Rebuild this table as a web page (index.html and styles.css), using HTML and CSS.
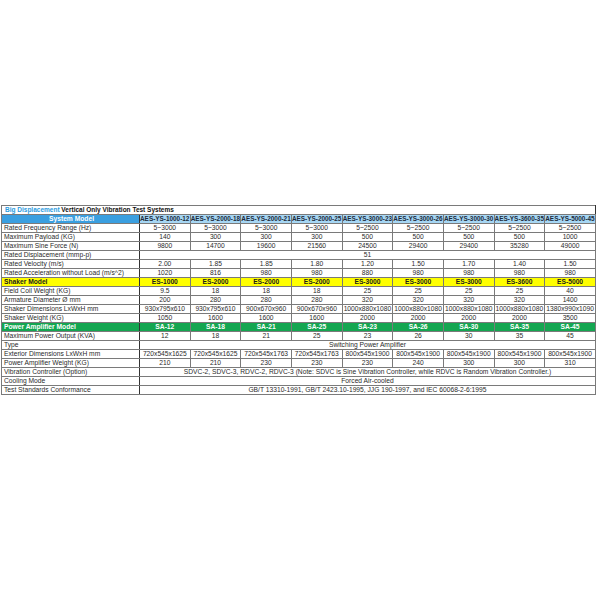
FILE: index.html
```html
<!DOCTYPE html>
<html>
<head>
<meta charset="utf-8">
<link rel="stylesheet" href="styles.css">
</head>
<body>
<div class="page">
<table class="spec">
<colgroup><col class="c-label"><col class="c-data"><col class="c-data"><col class="c-data"><col class="c-data"><col class="c-data"><col class="c-data"><col class="c-data"><col class="c-data"><col class="c-data"></colgroup>
<tr class="title"><td colspan="10"><span class="blue">Big Displacement</span> Vertical Only Vibration Test Systems</td></tr>
<tr class="sys"><td class="sys-label">System Model</td><td>AES-YS-1000-12</td><td>AES-YS-2000-18</td><td>AES-YS-2000-21</td><td>AES-YS-2000-25</td><td>AES-YS-3000-23</td><td>AES-YS-3000-26</td><td>AES-YS-3000-30</td><td>AES-YS-3600-35</td><td>AES-YS-5000-45</td></tr>
<tr><td>Rated Frequency Range (Hz)</td><td>5~3000</td><td>5~3000</td><td>5~3000</td><td>5~3000</td><td>5~2500</td><td>5~2500</td><td>5~2500</td><td>5~2500</td><td>5~2500</td></tr>
<tr><td>Maximum Payload (KG)</td><td>140</td><td>300</td><td>300</td><td>300</td><td>500</td><td>500</td><td>500</td><td>500</td><td>1000</td></tr>
<tr><td>Maximum Sine Force (N)</td><td>9800</td><td>14700</td><td>19600</td><td>21560</td><td>24500</td><td>29400</td><td>29400</td><td>35280</td><td>49000</td></tr>
<tr><td>Rated Displacement (mmp-p)</td><td colspan="9">51</td></tr>
<tr><td>Rated Velocity (m/s)</td><td>2.00</td><td>1.85</td><td>1.85</td><td>1.80</td><td>1.20</td><td>1.50</td><td>1.70</td><td>1.40</td><td>1.50</td></tr>
<tr><td>Rated Acceleration without Load (m/s^2)</td><td>1020</td><td>816</td><td>980</td><td>980</td><td>880</td><td>980</td><td>980</td><td>980</td><td>980</td></tr>
<tr class="shaker"><td>Shaker Model</td><td>ES-1000</td><td>ES-2000</td><td>ES-2000</td><td>ES-2000</td><td>ES-3000</td><td>ES-3000</td><td>ES-3000</td><td>ES-3600</td><td>ES-5000</td></tr>
<tr><td>Field Coil Weight (KG)</td><td>9.5</td><td>18</td><td>18</td><td>18</td><td>25</td><td>25</td><td>25</td><td>25</td><td>40</td></tr>
<tr><td>Armature Diameter Ø mm</td><td>200</td><td>280</td><td>280</td><td>280</td><td>320</td><td>320</td><td>320</td><td>320</td><td>1400</td></tr>
<tr><td>Shaker Dimensions LxWxH mm</td><td>930x795x610</td><td>930x795x610</td><td>900x670x960</td><td>900x670x960</td><td>1000x880x1080</td><td>1000x880x1080</td><td>1000x880x1080</td><td>1000x880x1080</td><td>1380x990x1090</td></tr>
<tr><td>Shaker Weight (KG)</td><td>1050</td><td>1600</td><td>1600</td><td>1600</td><td>2000</td><td>2000</td><td>2000</td><td>2000</td><td>3500</td></tr>
<tr class="amp"><td>Power Amplifier Model</td><td>SA-12</td><td>SA-18</td><td>SA-21</td><td>SA-25</td><td>SA-23</td><td>SA-26</td><td>SA-30</td><td>SA-35</td><td>SA-45</td></tr>
<tr><td>Maximum Power Output (KVA)</td><td>12</td><td>18</td><td>21</td><td>25</td><td>23</td><td>26</td><td>30</td><td>35</td><td>45</td></tr>
<tr><td>Type</td><td colspan="9">Switching Power Amplifier</td></tr>
<tr><td>Exterior Dimensions LxWxH mm</td><td>720x545x1625</td><td>720x545x1625</td><td>720x545x1763</td><td>720x545x1763</td><td>800x545x1900</td><td>800x545x1900</td><td>800x545x1900</td><td>800x545x1900</td><td>800x545x1900</td></tr>
<tr><td>Power Amplifier Weight (KG)</td><td>210</td><td>210</td><td>230</td><td>230</td><td>230</td><td>240</td><td>300</td><td>300</td><td>310</td></tr>
<tr><td>Vibration Controller (Option)</td><td colspan="9">SDVC-2, SDVC-3, RDVC-2, RDVC-3 (Note: SDVC is Sine Vibration Controller, while RDVC is Random Vibration Controller.)</td></tr>
<tr><td>Cooling Mode</td><td colspan="9">Forced Air-cooled</td></tr>
<tr><td>Test Standards Conformance</td><td colspan="9">GB/T 13310-1991, GB/T 2423.10-1995, JJG 190-1997, and IEC 60068-2-6:1995</td></tr>
</table>
</div>
</body>
</html>
```

FILE: styles.css
```css
html, body {
  margin: 0;
  padding: 0;
  background: #ffffff;
}
.page {
  padding: 205px 0 0 1px;
}
.spec {
  border-collapse: collapse;
  table-layout: fixed;
  width: 594px;
  font-family: "Liberation Sans", Arial, sans-serif;
  font-size: 6.7px;
  color: #2a2a2a;
}
.c-label { width: 138px; }
.c-data { width: 50.67px; }
.spec td {
  height: 8px;
  line-height: 8px;
  padding: 0;
  border: 1px solid #7a7a7a;
  text-align: center;
  white-space: nowrap;
  overflow: hidden;
}
.spec td:first-child {
  text-align: left;
  padding-left: 2px;
  border-right: 1px solid #333333;
}
.spec .title td {
  font-weight: bold;
  color: #111;
  padding-left: 3px;
  font-size: 6.5px;
}
.blue { color: #2a9be0; }
.spec .sys td {
  background: #a6d6f3;
  font-weight: bold;
  text-align: left;
  font-size: 6.4px;
  color: #1c2a3a;
}
.spec .sys td.sys-label {
  background: #3a9fe0;
  color: #ffffff;
  text-align: center;
  font-size: 6.7px;
}
.spec .shaker td {
  background: #ffff00;
  font-weight: bold;
  color: #1a1a1a;
}
.spec .amp td {
  background: #14a651;
  font-weight: bold;
  color: #ffffff;
}
```
